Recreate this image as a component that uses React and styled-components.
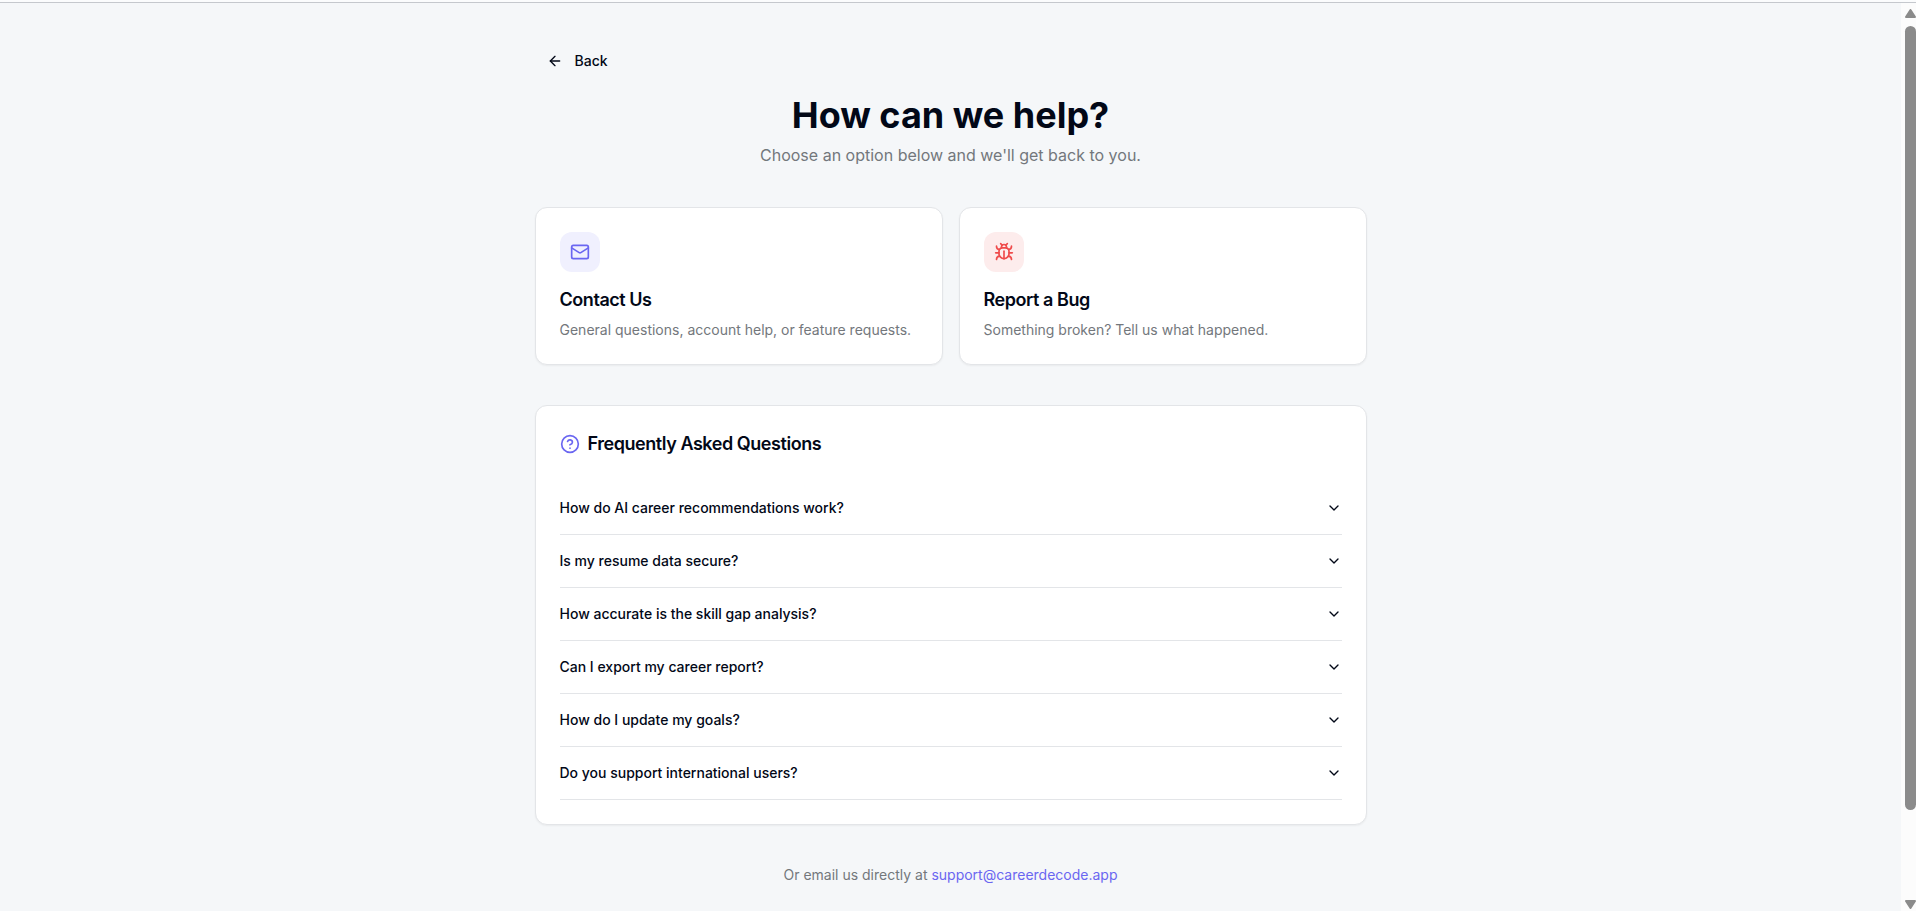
import { useState } from "react";
import styled, { createGlobalStyle } from "styled-components";
import { ArrowLeft, Bug, ChevronDown, CircleHelp, Mail } from "lucide-react";

const faqs = [
  {
    question: "How do AI career recommendations work?",
    answer: "We compare your skills and goals with current roles.",
  },
  {
    question: "Is my resume data secure?",
    answer: "Yes. Your resume is encrypted and never shared.",
  },
  {
    question: "How accurate is the skill gap analysis?",
    answer: "It is based on live job postings for your target role.",
  },
  {
    question: "Can I export my career report?",
    answer: "Yes, you can download it from your dashboard.",
  },
  {
    question: "How do I update my goals?",
    answer: "Open your profile and edit the goals section.",
  },
  {
    question: "Do you support international users?",
    answer: "Yes, the service is available worldwide.",
  },
];

const App = () => {
  const [openIndex, setOpenIndex] = useState(null);

  const handleToggle = (index) => {
    setOpenIndex(openIndex === index ? null : index);
  };

  return (
    <>
      <GlobalStyle />
      <TopEdge />
      <Shell>
        <Page>
          <Container>
            <BackButton type="button">
              <ArrowLeft size={16} />
              Back
            </BackButton>
            <Header>
              <Title>How can we help?</Title>
              <Subtitle>Choose an option below and we'll get back to you.</Subtitle>
            </Header>
            <OptionGrid>
              <OptionCard type="button">
                <IconBox $color="#6a66f1" $background="#f0f0fe">
                  <Mail size={20} />
                </IconBox>
                <OptionTitle>Contact Us</OptionTitle>
                <OptionText>
                  General questions, account help, or feature requests.
                </OptionText>
              </OptionCard>
              <OptionCard type="button">
                <IconBox $color="#ef4b4b" $background="#fdecec">
                  <Bug size={20} />
                </IconBox>
                <OptionTitle>Report a Bug</OptionTitle>
                <OptionText>Something broken? Tell us what happened.</OptionText>
              </OptionCard>
            </OptionGrid>
            <FaqCard>
              <FaqTitle>
                <CircleHelp size={20} />
                Frequently Asked Questions
              </FaqTitle>
              {faqs.map((faq, index) => (
                <FaqItem key={faq.question}>
                  <FaqButton
                    type="button"
                    aria-expanded={openIndex === index}
                    onClick={() => handleToggle(index)}
                  >
                    {faq.question}
                    <Chevron size={16} $open={openIndex === index} />
                  </FaqButton>
                  {openIndex === index && <FaqAnswer>{faq.answer}</FaqAnswer>}
                </FaqItem>
              ))}
            </FaqCard>
            <Footer>
              Or email us directly at{" "}
              <EmailLink href="mailto:support@careerdecode.app">
                support@careerdecode.app
              </EmailLink>
            </Footer>
          </Container>
        </Page>
        <ScrollTrack aria-hidden="true">
          <ScrollArrow viewBox="0 0 11 9">
            <path d="M5.5 1 10 8H1Z" />
          </ScrollArrow>
          <ScrollRail>
            <ScrollThumb />
          </ScrollRail>
          <ScrollArrow viewBox="0 0 11 9">
            <path d="M5.5 8 10 1H1Z" />
          </ScrollArrow>
        </ScrollTrack>
      </Shell>
    </>
  );
};

export default App;

const GlobalStyle = createGlobalStyle`
  *, *::before, *::after {
    box-sizing: border-box;
  }

  body {
    margin: 0;
    background: #f5f7f9;
    color: #020817;
    font-family: Inter, sans-serif;
    font-size: 14px;
    line-height: 20px;
  }

  #root {
    display: flex;
    flex-direction: column;
    min-height: 100vh;
  }

  h1, h2, p {
    margin: 0;
  }

  button {
    font: inherit;
    color: inherit;
    cursor: pointer;
  }
`;

const TopEdge = styled.div`
  height: 3px;
  background: #fbfcfd;
  border-bottom: 1px solid #c5c8cd;
`;

const Shell = styled.div`
  flex: 1;
  display: flex;
`;

const Page = styled.main`
  flex: 1;
  min-width: 0;
  padding: 40px 32px 24px;
`;

const Container = styled.div`
  max-width: 832px;
  margin: 0 auto;
`;

const BackButton = styled.button`
  display: flex;
  align-items: center;
  gap: 12px;
  height: 36px;
  padding: 0 12px;
  font-weight: 500;
  background: none;
  border: none;
  border-radius: 6px;

  &:hover {
    background: #e9ecf1;
  }
`;

const Header = styled.header`
  margin: 16px 0 40px;
  text-align: center;
`;

const Title = styled.h1`
  margin-bottom: 8px;
  font-size: 36px;
  line-height: 40px;
  font-weight: 700;
`;

const Subtitle = styled.p`
  font-size: 16px;
  line-height: 24px;
  color: #73777c;
`;

const OptionGrid = styled.div`
  display: grid;
  grid-template-columns: 1fr 1fr;
  gap: 16px;
  margin-bottom: 40px;

  @media (max-width: 768px) {
    grid-template-columns: 1fr;
  }
`;

const OptionCard = styled.button`
  display: flex;
  flex-direction: column;
  align-items: flex-start;
  padding: 24px;
  text-align: left;
  background: #ffffff;
  border: 1px solid #e3e5e8;
  border-radius: 12px;
  box-shadow: 0 1px 2px rgba(0, 0, 0, 0.05);

  &:hover {
    border-color: #6366f1;
  }
`;

const IconBox = styled.span`
  display: flex;
  align-items: center;
  justify-content: center;
  width: 40px;
  height: 40px;
  margin-bottom: 16px;
  color: ${(props) => props.$color};
  background: ${(props) => props.$background};
  border-radius: 12px;
`;

const OptionTitle = styled.span`
  margin-bottom: 8px;
  font-size: 18px;
  line-height: 24px;
  font-weight: 600;
  letter-spacing: -0.025em;
`;

const OptionText = styled.span`
  color: #73777c;
`;

const FaqCard = styled.section`
  padding: 24px;
  background: #ffffff;
  border: 1px solid #e3e5e8;
  border-radius: 12px;
  box-shadow: 0 1px 2px rgba(0, 0, 0, 0.05);
`;

const FaqTitle = styled.h2`
  display: flex;
  align-items: center;
  gap: 8px;
  margin-bottom: 24px;
  font-size: 18px;
  line-height: 28px;
  font-weight: 600;
  letter-spacing: -0.025em;

  svg {
    color: #6a66f1;
  }
`;

const FaqItem = styled.div`
  border-bottom: 1px solid #e3e5e8;
`;

const FaqButton = styled.button`
  display: flex;
  align-items: center;
  justify-content: space-between;
  width: 100%;
  padding: 16px 0;
  font-weight: 500;
  text-align: left;
  background: none;
  border: none;
`;

const Chevron = styled(ChevronDown)`
  flex-shrink: 0;
  transform: ${(props) => (props.$open ? "rotate(180deg)" : "none")};
  transition: transform 0.2s ease;
`;

const FaqAnswer = styled.p`
  padding-bottom: 16px;
  color: #73777c;
`;

const Footer = styled.footer`
  margin-top: 40px;
  text-align: center;
  color: #73777c;
`;

const EmailLink = styled.a`
  color: #6a66f1;
  text-decoration: none;

  &:hover {
    text-decoration: underline;
  }
`;

const ScrollTrack = styled.div`
  display: flex;
  flex-direction: column;
  align-items: flex-end;
  gap: 8px;
  width: 15px;
  padding: 6px 0 2px;
  background: #fcfcfc;
`;

const ScrollArrow = styled.svg`
  width: 11px;
  height: 9px;
  fill: #8b8b8b;
  stroke: #8b8b8b;
  stroke-width: 2;
  stroke-linejoin: round;
`;

const ScrollRail = styled.div`
  flex: 1;
  width: 11px;
`;

const ScrollThumb = styled.div`
  height: calc(100% - 82px);
  background: #8b8b8b;
  border-radius: 6px;
`;
